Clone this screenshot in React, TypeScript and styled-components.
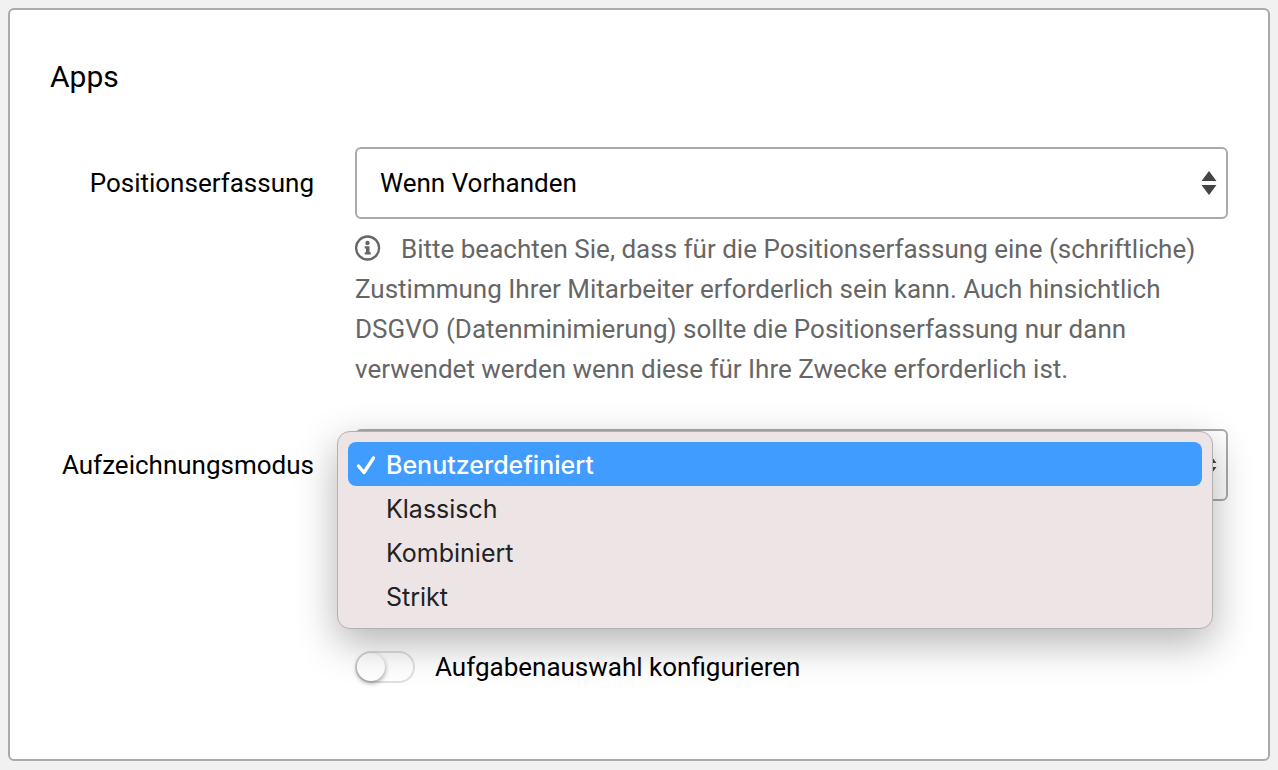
import React, { useState } from "react";
import styled, { createGlobalStyle } from "styled-components";

const GlobalStyle = createGlobalStyle`
  *, *::before, *::after { box-sizing: border-box; }
  body {
    margin: 0;
    background: #f1f1f1;
    color: #000;
    font-family: Roboto, "Liberation Sans", sans-serif;
    font-size: 26px;
    line-height: 40px;
  }
`;

const Page = styled.main`
  padding: 8px 8px 9px;
`;

const Card = styled.section`
  padding: 47px 40px 72px;
  background: #fff;
  border: 2px solid #aaa;
  border-radius: 6px;
`;

const Title = styled.h2`
  margin: 0 0 50px;
  font-size: 30px;
  font-weight: 400;
  line-height: 40px;
`;

const Form = styled.form`
  display: grid;
  gap: 40px;
`;

const Row = styled.div`
  display: grid;
  grid-template-columns: 264px minmax(0, 1fr);
  column-gap: 41px;
`;

const Label = styled.label`
  padding: 16px 0;
  text-align: right;
`;

const Field = styled.div`
  position: relative;
  grid-column: 2;
`;

const SelectBox = styled.div`
  display: grid;
  align-items: center;

  > * { grid-area: 1 / 1; }
`;

const Select = styled.select`
  appearance: none;
  width: 100%;
  height: 72px;
  padding: 0 48px 0 23px;
  border: 2px solid #aaa;
  border-radius: 6px;
  background: #fff;
  color: #000;
  font: inherit;
`;

const Arrows = styled.svg`
  justify-self: end;
  margin-right: 11px;
  pointer-events: none;
`;

const Hint = styled.p`
  margin: 10px 0 0;
  color: #666;
`;

const HintIcon = styled.svg`
  margin-right: 20px;
  vertical-align: -3px;
`;

const Menu = styled.div`
  position: absolute;
  z-index: 1;
  top: 2px;
  left: -18px;
  right: 15px;
  display: flex;
  flex-direction: column;
  padding: 10px;
  background: #ede4e5;
  border: 1px solid #b4b0b1;
  border-radius: 13px;
  box-shadow: 0 14px 40px rgba(0, 0, 0, 0.3);
`;

const Option = styled.button<{ $active: boolean }>`
  display: grid;
  grid-template-columns: 20px 1fr;
  column-gap: 10px;
  align-items: center;
  height: 44px;
  padding: 2px 8px 0;
  border: 0;
  border-radius: 8px;
  background: ${(p) => (p.$active ? "#419cff" : "transparent")};
  color: ${(p) => (p.$active ? "#fff" : "#222")};
  font-family: Inter, "Liberation Sans", sans-serif;
  font-size: 25px;
  font-weight: ${(p) => (p.$active ? 500 : 400)};
  line-height: 32px;
  text-align: left;
`;

const OptionText = styled.span`
  grid-column: 2;
`;

const SwitchRow = styled.label`
  display: flex;
  align-items: center;
  gap: 20px;
  margin-top: 106px;
`;

const Switch = styled.input`
  appearance: none;
  display: flex;
  align-items: center;
  justify-content: flex-start;
  width: 60px;
  height: 32px;
  margin: 0;
  border: 2px solid #dfdfdf;
  border-radius: 16px;
  background: transparent;

  &::before {
    content: "";
    width: 28px;
    height: 28px;
    border-radius: 50%;
    background: #fff;
    box-shadow: 0 2px 5px rgba(0, 0, 0, 0.4);
  }

  &:checked {
    justify-content: flex-end;
    background: #419cff;
  }
`;

const SelectArrows = () => (
  <Arrows width="16" height="24" viewBox="0 0 16 24" fill="#444" aria-hidden="true">
    <path d="M8 0l7.500 10H.5zM8 24L.5 14h15z" />
  </Arrows>
);

const InfoIcon = () => (
  <HintIcon width="26" height="26" viewBox="0 0 26 26" aria-hidden="true">
    <circle cx="12.600" cy="13" r="11.500" fill="none" stroke="#666" strokeWidth="2.300" />
    <circle cx="12.500" cy="8" r="2.200" fill="#666" />
    <path d="M9.700 11.200h4.800v6.100h1.300v2.200H9.700v-2.200H11v-3.900H9.700z" fill="#666" />
  </HintIcon>
);

const CheckIcon = () => (
  <svg width="20" height="22" viewBox="0 0 20 22" fill="none" aria-hidden="true">
    <path d="M2.500 12L8 18.500 17.500 4" stroke="#fff" strokeWidth="3.400" strokeLinecap="round" strokeLinejoin="round" />
  </svg>
);

const modes = ["Benutzerdefiniert", "Klassisch", "Kombiniert", "Strikt"];

export default function App() {
  const [mode, setMode] = useState(modes[0]);

  return (
    <>
      <GlobalStyle />
      <Page>
        <Card>
          <Title>Apps</Title>
          <Form>
            <Row>
              <Label htmlFor="position">Positionserfassung</Label>
              <Field>
                <SelectBox>
                  <Select id="position" defaultValue="Wenn Vorhanden" aria-describedby="position-hint">
                    <option>Wenn Vorhanden</option>
                  </Select>
                  <SelectArrows />
                </SelectBox>
                <Hint id="position-hint">
                  <InfoIcon />
                  Bitte beachten Sie, dass für die Positionserfassung eine (schriftliche) Zustimmung Ihrer Mitarbeiter
                  erforderlich sein kann. Auch hinsichtlich DSGVO (Datenminimierung) sollte die Positionserfassung nur
                  dann verwendet werden wenn diese für Ihre Zwecke erforderlich ist.
                </Hint>
              </Field>
            </Row>
            <Row>
              <Label htmlFor="mode">Aufzeichnungsmodus</Label>
              <Field>
                <SelectBox>
                  <Select id="mode" value={mode} onChange={(e) => setMode(e.target.value)}>
                    {modes.map((m) => (
                      <option key={m}>{m}</option>
                    ))}
                  </Select>
                  <SelectArrows />
                </SelectBox>
                <Menu role="listbox" aria-label="Aufzeichnungsmodus">
                  {modes.map((m) => (
                    <Option
                      key={m}
                      type="button"
                      role="option"
                      aria-selected={m === mode}
                      $active={m === mode}
                      onClick={() => setMode(m)}
                    >
                      {m === mode && <CheckIcon />}
                      <OptionText>{m}</OptionText>
                    </Option>
                  ))}
                </Menu>
              </Field>
            </Row>
            <Row>
              <Field>
                <SwitchRow>
                  <Switch type="checkbox" role="switch" />
                  Aufgabenauswahl konfigurieren
                </SwitchRow>
              </Field>
            </Row>
          </Form>
        </Card>
      </Page>
    </>
  );
}
